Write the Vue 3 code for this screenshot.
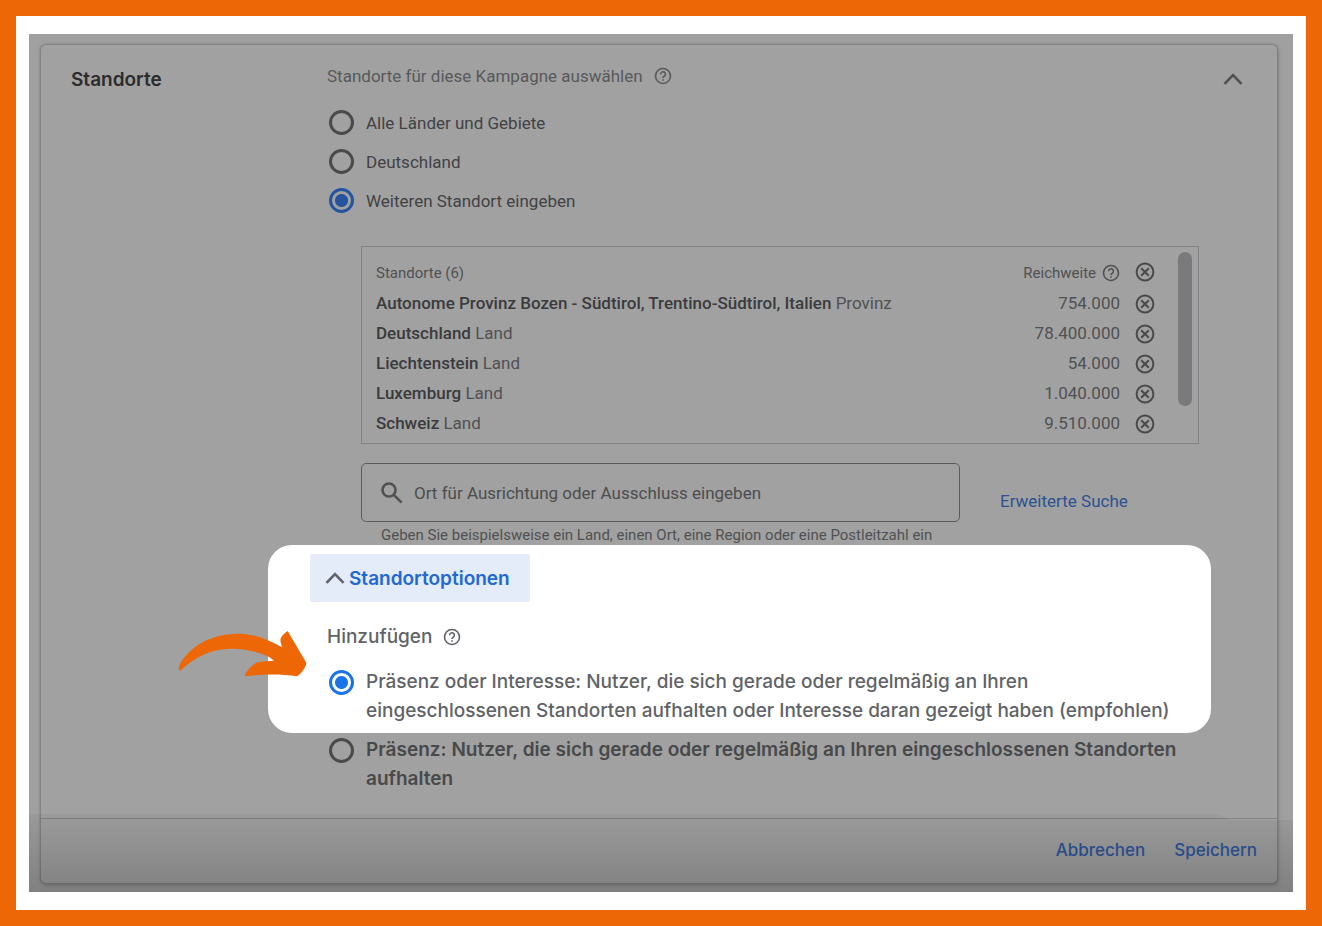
<script setup>
import { ref } from 'vue'

const target = ref('custom')
const presence = ref('interest')
const query = ref('')

const choices = [
  { value: 'all', label: 'Alle Länder und Gebiete' },
  { value: 'de', label: 'Deutschland' },
  { value: 'custom', label: 'Weiteren Standort eingeben' },
]

const locations = [
  { name: 'Autonome Provinz Bozen - Südtirol, Trentino-Südtirol, Italien', type: 'Provinz', reach: '754.000' },
  { name: 'Deutschland', type: 'Land', reach: '78.400.000' },
  { name: 'Liechtenstein', type: 'Land', reach: '54.000' },
  { name: 'Luxemburg', type: 'Land', reach: '1.040.000' },
  { name: 'Schweiz', type: 'Land', reach: '9.510.000' },
]
</script>

<template>
  <main class="frame">
    <div class="stage">
      <section class="card">
        <div class="body">
          <h1 class="title">Standorte</h1>

          <div class="content">
            <fieldset class="group">
              <legend class="legend">
                Standorte für diese Kampagne auswählen
                <button class="icon-btn" type="button" aria-label="Hilfe">
                  <svg class="help" viewBox="0 0 18 18"><circle cx="9" cy="9" r="7.5" /><path d="M6.6 7.2a2.4 2.4 0 1 1 3.9 1.9C9.5 9.8 9 10 9 11M9 12.2v1.6" /></svg>
                </button>
              </legend>
              <label v-for="c in choices" :key="c.value" class="choice">
                <input v-model="target" class="radio" type="radio" name="target" :value="c.value" />
                <span>{{ c.label }}</span>
              </label>
            </fieldset>

            <div class="list">
              <table class="table">
                <thead>
                  <tr>
                    <th class="left" scope="col">Standorte (6)</th>
                    <th class="right" scope="col">
                      <span class="reach">Reichweite
                        <button class="icon-btn" type="button" aria-label="Hilfe zur Reichweite">
                          <svg class="help" viewBox="0 0 18 18"><circle cx="9" cy="9" r="7.5" /><path d="M6.6 7.2a2.4 2.4 0 1 1 3.9 1.9C9.5 9.8 9 10 9 11M9 12.2v1.6" /></svg>
                        </button>
                      </span>
                    </th>
                    <td class="remove">
                      <button class="icon-btn" type="button" aria-label="Alle entfernen">
                        <svg class="cross" viewBox="0 0 20 20"><circle cx="10" cy="10" r="8.4" /><path d="M6.2 6.2l7.6 7.6M13.8 6.2l-7.6 7.6" /></svg>
                      </button>
                    </td>
                  </tr>
                </thead>
                <tbody>
                  <tr v-for="l in locations" :key="l.name">
                    <td class="left"><span class="name">{{ l.name }}</span> {{ l.type }}</td>
                    <td class="right">{{ l.reach }}</td>
                    <td class="remove">
                      <button class="icon-btn" type="button" :aria-label="l.name + ' entfernen'">
                        <svg class="cross" viewBox="0 0 20 20"><circle cx="10" cy="10" r="8.4" /><path d="M6.2 6.2l7.6 7.6M13.8 6.2l-7.6 7.6" /></svg>
                      </button>
                    </td>
                  </tr>
                </tbody>
              </table>
              <div class="scroll"><div class="thumb"></div></div>
            </div>

            <div class="search-row">
              <div class="field">
                <svg class="lens" viewBox="0 0 24 24"><circle cx="9" cy="9" r="6.5" /><path d="M13.6 13.6l8 8" /></svg>
                <input v-model="query" class="query" type="text" aria-label="Ort" placeholder="Ort für Ausrichtung oder Ausschluss eingeben" />
              </div>
              <a class="advanced" href="#">Erweiterte Suche</a>
            </div>
            <p class="hint">Geben Sie beispielsweise ein Land, einen Ort, eine Region oder eine Postleitzahl ein</p>

            <div class="spotlight">
              <svg class="arrow" viewBox="55 270 387 144"><path d="M61 393C53 388 58 373 72 355C110 305 170 281 240 281C285 282 322 297 368 322C357 298 362 289 384 273L439 367C444 374 424 404 412 409C365 402 310 402 255 409C258 397 276 372 294 367C310 363 328 364 343 362C325 343 265 325 215 326C150 327 100 355 61 393Z" /></svg>
              <button class="toggle" type="button">
                <svg class="chevron" viewBox="0 0 20 12"><path d="M1.5 10.8L10 2l8.5 8.8" /></svg>
                Standortoptionen
              </button>
              <h2 class="subtitle">
                Hinzufügen
                <button class="icon-btn" type="button" aria-label="Hilfe zu Hinzufügen">
                  <svg class="help" viewBox="0 0 18 18"><circle cx="9" cy="9" r="7.5" /><path d="M6.6 7.2a2.4 2.4 0 1 1 3.9 1.9C9.5 9.8 9 10 9 11M9 12.2v1.6" /></svg>
                </button>
              </h2>
              <label class="option">
                <input v-model="presence" class="radio" type="radio" name="presence" value="interest" />
                <span>Präsenz oder Interesse: Nutzer, die sich gerade oder regelmäßig an Ihren<br />eingeschlossenen Standorten aufhalten oder Interesse daran gezeigt haben (empfohlen)</span>
              </label>
            </div>
            <label class="option dim">
              <input v-model="presence" class="radio" type="radio" name="presence" value="presence" />
              <span>Präsenz: Nutzer, die sich gerade oder regelmäßig an Ihren eingeschlossenen Standorten<br />aufhalten</span>
            </label>
          </div>

          <button class="icon-btn collapse" type="button" aria-label="Einklappen">
            <svg class="chevron" viewBox="0 0 20 12"><path d="M1.5 10.8L10 2l8.5 8.8" /></svg>
          </button>
        </div>

        <footer class="footer">
          <button class="action" type="button">Abbrechen</button>
          <button class="action" type="button">Speichern</button>
        </footer>
      </section>
      <div class="shade"></div>
    </div>
  </main>
</template>

<style>
body {
  background: #ed6707;
}
</style>

<style scoped>
.frame {
  box-sizing: border-box;
  min-height: 100vh;
  padding: 18px 13px 18px;
  border: 16px solid #ed6707;
  background: #fff;
  font-family: Roboto, "Liberation Sans", sans-serif;
  font-size: 17px;
  font-weight: 450;
  color: #505153;
}
.stage {
  position: relative;
  padding: 11px 16px 9px 12px;
  background: #a0a0a0;
}
.card {
  border-radius: 5px;
  background: #a1a1a1;
  box-shadow: 0 0 2px 1px #7c7c7c, 1px 2px 5px #808080;
}
.body {
  display: grid;
  grid-template-columns: 256px 1fr 66px;
  padding: 19px 0 25px 30px;
}
.title,
.toggle,
.subtitle,
.option,
.action {
  font-family: Inter, "Liberation Sans", sans-serif;
}
.title {
  margin: 2px 0 0;
  font-size: 19px;
  line-height: 28px;
  font-weight: 600;
  color: #2b2c2d;
}
button {
  font: inherit;
  color: inherit;
  border: 0;
  background: none;
  padding: 0;
  cursor: pointer;
}
svg {
  display: block;
  fill: none;
  stroke: currentColor;
}
.icon-btn {
  display: inline-flex;
  flex: none;
}
.help {
  width: 18px;
  height: 18px;
  stroke-width: 1.6;
}
.cross {
  width: 20px;
  height: 20px;
  stroke-width: 2;
  color: #4a4a4b;
}
.chevron {
  width: 20px;
  height: 12px;
  stroke-width: 2.6;
}
.group {
  margin: 0;
  padding: 0;
  border: 0;
}
.legend {
  display: flex;
  align-items: center;
  gap: 11px;
  height: 24px;
  padding: 0;
  margin-bottom: 15px;
  color: #58595b;
}
.choice {
  display: flex;
  align-items: center;
  gap: 12px;
  height: 39px;
  padding-left: 2px;
  color: #414244;
}
.radio {
  appearance: none;
  flex: none;
  width: 25px;
  height: 25px;
  margin: 0;
  border: 3px solid #4a4a4b;
  border-radius: 50%;
}
.radio:checked {
  border-color: #24549f;
  background: radial-gradient(circle, #24549f 6px, transparent 7px);
}
.list {
  display: flex;
  justify-content: space-between;
  margin: 26px 12px 0 34px;
  padding: 5px 6px 4px 14px;
  border: 1px solid #838383;
}
.table {
  flex: 1;
  border-collapse: collapse;
}
.table tr {
  height: 30px;
}
.table th,
.table td {
  padding: 0;
}
.table thead tr {
  height: 37px;
}
.table th {
  padding-top: 4px;
  font-size: 15px;
  font-weight: 450;
}
.table thead td {
  padding-top: 2px;
}
.table td.left,
.table td.right {
  padding-bottom: 2px;
}
.left {
  text-align: left;
}
.right {
  text-align: right;
}
.name {
  color: #3a3b3d;
  font-weight: 500;
}
.reach {
  display: inline-flex;
  align-items: center;
  gap: 6px;
}
.remove {
  width: 35px;
}
.remove .icon-btn {
  display: flex;
  margin-left: auto;
}
.scroll {
  width: 14px;
  margin-left: 23px;
}
.thumb {
  height: 154px;
  border-radius: 7px;
  background: #7a7a7c;
}
.search-row {
  display: flex;
  align-items: center;
  gap: 40px;
  margin: 19px 12px 0 34px;
}
.field {
  box-sizing: border-box;
  display: flex;
  align-items: center;
  gap: 10px;
  flex: 0 1 599px;
  height: 59px;
  padding: 0 18px;
  border: 1px solid #5c5c5c;
  border-radius: 5px;
}
.lens {
  width: 24px;
  height: 24px;
  stroke-width: 2.6;
}
.query {
  flex: 1;
  min-width: 0;
  padding: 0;
  border: 0;
  outline: 0;
  background: none;
  font: inherit;
  color: inherit;
}
.query::placeholder {
  color: #4c4d4f;
  opacity: 1;
}
.advanced {
  margin-top: 16px;
  color: #2b5292;
  text-decoration: none;
}
.hint {
  margin: 3px 0 0 54px;
  font-size: 15px;
  line-height: 20px;
}
.spotlight {
  position: relative;
  margin-left: -59px;
  padding: 9px 16px 8px 59px;
  border-radius: 24px;
  background: #fff;
  color: #5f6368;
}
.arrow {
  position: absolute;
  left: -90px;
  top: 85px;
  width: 129px;
  height: 48px;
  fill: #ed6707;
  stroke: none;
}
.toggle {
  display: flex;
  align-items: center;
  gap: 4px;
  height: 48px;
  margin-left: -17px;
  padding: 0 20px 0 15px;
  border-radius: 2px;
  background: #e4ebf9;
  color: #2069d3;
  font-size: 19px;
  font-weight: 600;
}
.toggle .chevron {
  color: #5f6368;
}
.subtitle {
  display: flex;
  align-items: center;
  gap: 11px;
  margin: 21px 0 16px;
  font-size: 19px;
  line-height: 28px;
  font-weight: 500;
}
.option {
  display: flex;
  align-items: flex-start;
  gap: 12px;
  padding-left: 2px;
  font-size: 19px;
  line-height: 29px;
  font-weight: 500;
  white-space: nowrap;
}
.option .radio {
  margin-top: 3px;
}
.spotlight .radio:checked {
  border-color: #1a73e8;
  background: radial-gradient(circle, #1a73e8 6px, transparent 7px);
}
.dim {
  margin-top: 2px;
  color: #48494b;
  font-weight: 600;
}
.collapse {
  align-self: start;
  margin: 9px 0 0 12px;
}
.footer {
  display: flex;
  justify-content: flex-end;
  gap: 29px;
  padding: 19px 20px 21px;
  border-top: 1px solid #838383;
  color: #2d569c;
  line-height: 24px;
}
.action {
  font-size: 17px;
  font-weight: 500;
}
.shade {
  position: absolute;
  inset: auto 0 0;
  height: 78px;
  background: linear-gradient(rgba(0, 0, 0, .04), rgba(0, 0, 0, .2));
  clip-path: polygon(0 0, 94% 0, 95% 6px, 100% 6px, 100% 100%, 0 100%);
  pointer-events: none;
}
</style>
